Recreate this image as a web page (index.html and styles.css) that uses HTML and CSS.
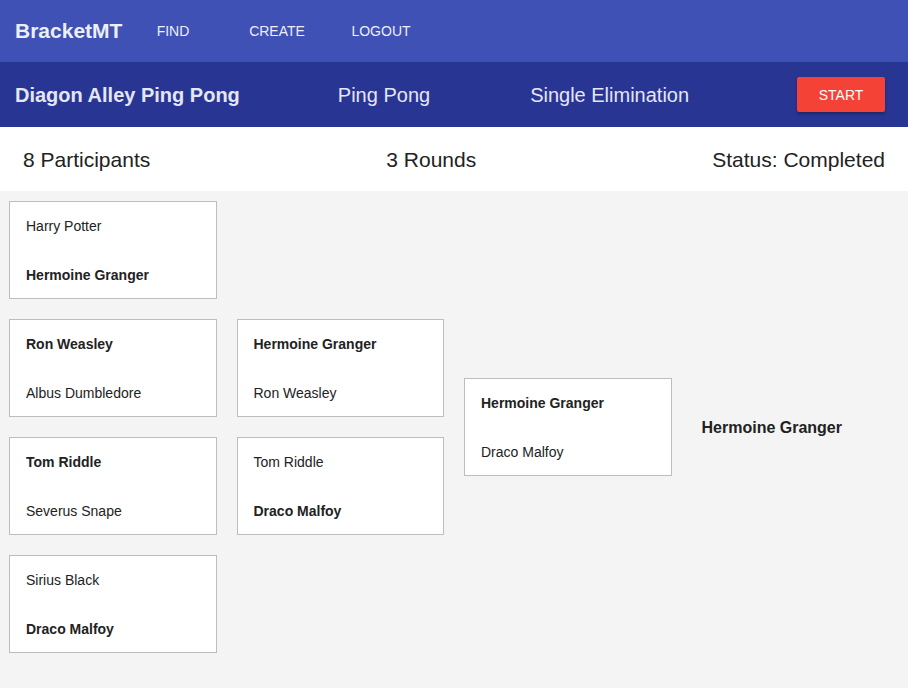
FILE: index.html
```html
<!DOCTYPE html>
<html>
<head>
<meta charset="utf-8">
<link rel="stylesheet" href="styles.css">
</head>
<body>
<nav class="topnav">
  <span class="brand">BracketMT</span>
  <a class="navlink">FIND</a>
  <a class="navlink">CREATE</a>
  <a class="navlink">LOGOUT</a>
</nav>
<header class="tbar">
  <span class="tname">Diagon Alley Ping Pong</span>
  <span class="tinfo">Ping Pong</span>
  <span class="tinfo">Single Elimination</span>
  <button class="start">START</button>
</header>
<section class="stats">
  <span>8 Participants</span>
  <span>3 Rounds</span>
  <span>Status: Completed</span>
</section>
<main class="bracket">
  <div class="col">
    <div class="match"><div class="p">Harry Potter</div><div class="p win">Hermoine Granger</div></div>
    <div class="match"><div class="p win">Ron Weasley</div><div class="p">Albus Dumbledore</div></div>
    <div class="match"><div class="p win">Tom Riddle</div><div class="p">Severus Snape</div></div>
    <div class="match"><div class="p">Sirius Black</div><div class="p win">Draco Malfoy</div></div>
  </div>
  <div class="col">
    <div class="match"><div class="p win">Hermoine Granger</div><div class="p">Ron Weasley</div></div>
    <div class="match"><div class="p">Tom Riddle</div><div class="p win">Draco Malfoy</div></div>
  </div>
  <div class="col">
    <div class="match"><div class="p win">Hermoine Granger</div><div class="p">Draco Malfoy</div></div>
  </div>
  <div class="col winner-col">
    <div class="winner">Hermoine Granger</div>
  </div>
</main>
</body>
</html>
```
FILE: styles.css
```css
* { box-sizing: border-box; }
html, body { margin: 0; padding: 0; }
body {
  background: #f4f4f4;
  font-family: "Liberation Sans", Arial, Helvetica, sans-serif;
  color: #222;
  width: 908px;
  min-height: 688px;
}
.topnav {
  height: 62px;
  background: #3f51b5;
  display: flex;
  align-items: center;
  padding-left: 15px;
  color: #eceef8;
}
.brand {
  font-size: 21px;
  font-weight: bold;
  width: 106px;
  white-space: nowrap;
}
.navlink {
  width: 104px;
  text-align: center;
  font-size: 14px;
}
.tbar {
  height: 65px;
  background: #283593;
  display: flex;
  align-items: center;
  padding: 2px 23px 0 15px;
  color: #e4e6f4;
  font-size: 20px;
  gap: 98px;
}
.tinfo:last-of-type { margin-left: 2px; }
.tname { font-weight: bold; }
.start {
  margin-left: auto;
  margin-top: -2px;
  width: 88px;
  height: 35px;
  background: #f44336;
  color: #fff;
  border: none;
  border-radius: 2px;
  font-family: inherit;
  font-size: 14px;
  box-shadow: 0 2px 3px rgba(0,0,0,0.3);
  padding: 0;
}
.stats {
  height: 64px;
  background: #fff;
  display: flex;
  justify-content: space-between;
  align-items: center;
  padding: 2px 23px 0;
  font-size: 21px;
  color: #222;
}
.bracket {
  display: flex;
  gap: 20px;
  padding: 10px 9px;
}
.col {
  display: flex;
  flex-direction: column;
  justify-content: center;
  gap: 20px;
}
.match {
  width: 207.5px;
  background: #fff;
  border: 1px solid #bdbdbd;
}
.p {
  height: 48px;
  display: flex;
  align-items: center;
  padding-left: 16px;
  font-size: 14px;
  color: #222;
}
.p + .p { padding-top: 2px; }
.win { font-weight: bold; }
.winner-col { padding-left: 10px; }
.winner {
  font-size: 16px;
  font-weight: bold;
  color: #222;
  padding-top: 2px;
}
```
